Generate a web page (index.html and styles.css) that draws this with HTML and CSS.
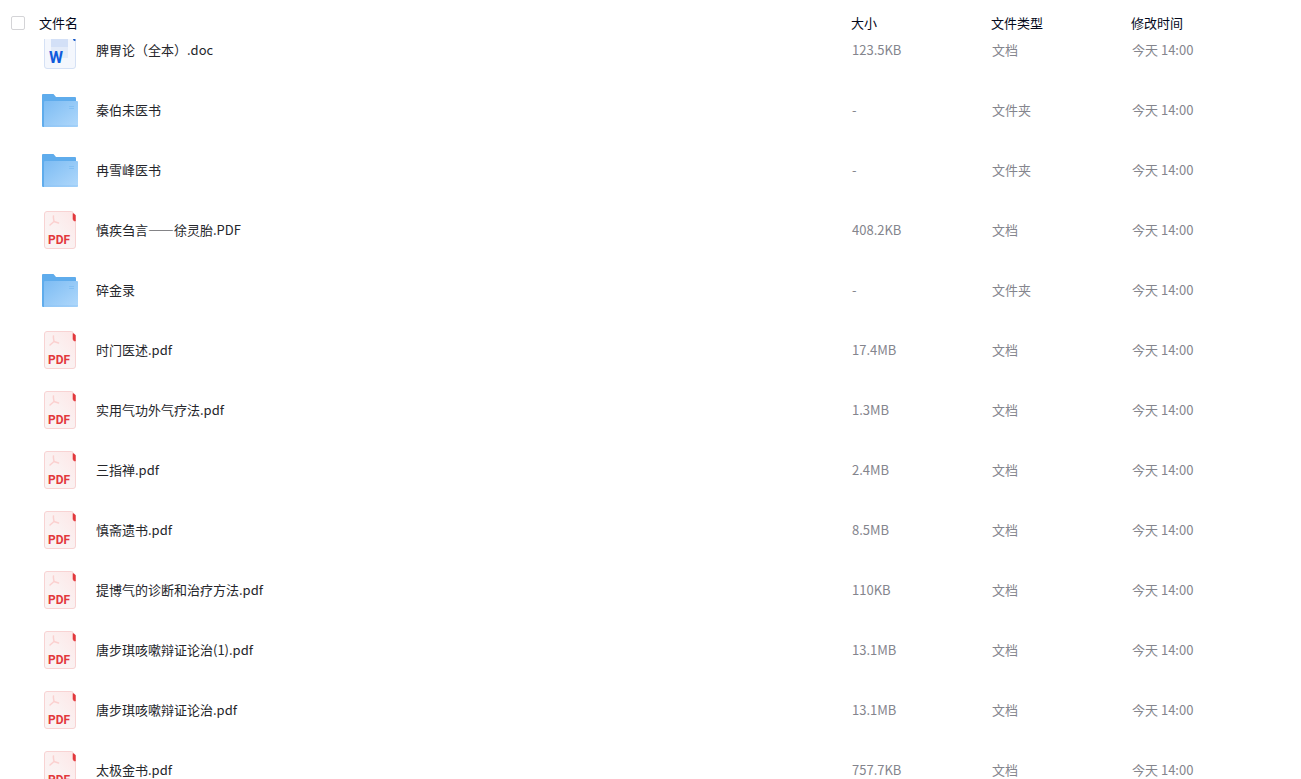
FILE: index.html
```html
<!DOCTYPE html>
<html lang="zh-CN">
<head>
<meta charset="utf-8">
<title>文件列表</title>
<link rel="stylesheet" href="styles.css">
</head>
<body>

<svg class="symbols" aria-hidden="true">
  <defs>
    <linearGradient id="folder-front" x1="0" y1="0" x2="1" y2="1">
      <stop offset="0" stop-color="#7dbcf3"/>
      <stop offset="1" stop-color="#b0d8fb"/>
    </linearGradient>
    <linearGradient id="pdf-page" x1="1" y1="0" x2="0" y2="1">
      <stop offset="0" stop-color="#fde6e6"/>
      <stop offset="0.5" stop-color="#fbf1f1"/>
      <stop offset="1" stop-color="#faf5f5"/>
    </linearGradient>
  </defs>
  <symbol id="icon-folder" viewBox="0 0 40 40">
    <path d="M2 5a1 1 0 0 1 1-1h10.500l2.500 3h19a1 1 0 0 1 1 1v29H3a1 1 0 0 1-1-1z" fill="#5facec"/>
    <path d="M4 12a1 1 0 0 1 1-1h32a1 1 0 0 1 1 1v24a1 1 0 0 1-1 1H4z" fill="url(#folder-front)"/>
    <path d="M4 35h34v1a1 1 0 0 1-1 1H4z" fill="#8cc4f5" opacity=".4"/>
    <path d="M29 16.500h5M29 18.500h5" stroke="#84c0f4"/>
  </symbol>
  <symbol id="icon-pdf" viewBox="0 0 40 40">
    <path d="M7 1.500h24.500q1.500 0 1.500 1.500v5.500q0 2 2.500 2.500V36a2.500 2.500 0 0 1-2.500 2.500H7A2.500 2.500 0 0 1 4.500 36V4A2.500 2.500 0 0 1 7 1.500z" fill="url(#pdf-page)" stroke="#f8d3d3"/>
    <path d="M33 3.500q2 .5 2.500 2V11h-1q-1.500-.5-1.500-2z" fill="#e2393d" stroke="#e2393d" stroke-width=".5"/>
    <path d="M13.500 6c-.5 2 .500 4 .500 5.500l-4 3.500M14 11.500l4.500 1.500" fill="none" stroke="#fbd0cf" stroke-width="1.500" stroke-linecap="round"/>
  </symbol>
  <symbol id="icon-doc" viewBox="0 0 40 40">
    <path d="M7 1.500h24.500q1.500 0 1.500 1.500v5.500q0 2 2.500 2.500V36a2.500 2.500 0 0 1-2.500 2.500H7A2.500 2.500 0 0 1 4.500 36V4A2.500 2.500 0 0 1 7 1.500z" fill="#f4f7fd" stroke="#d5e1f5"/>
    <path d="M33 3.500q2 .5 2.500 2V11h-1q-1.500-.5-1.500-2z" fill="#1659c7"/>
    <path d="M11 7h17v10H11z" fill="#d3e0f7"/>
    <path d="M11 17h17v11H11z" fill="#e3ebf9"/>
  </symbol>
</svg>

<div class="file-list">
  <table class="files files-head">
    <thead>
      <tr>
        <th class="col-check"><input type="checkbox" class="check-all" aria-label="全选"></th>
        <th class="col-title">文件名</th>
        <th class="col-size">大小</th>
        <th class="col-type">文件类型</th>
        <th class="col-time">修改时间</th>
      </tr>
    </thead>
  </table>

  <div class="files-scroll">
    <table class="files files-body">
      <tbody>
        <tr>
          <td class="col-icon"><svg class="icon"><use href="#icon-doc"/><text x="9" y="33" class="doc-mark">W</text></svg></td>
          <td class="col-name">脾胃论（全本）.doc</td>
          <td class="col-size">123.5KB</td>
          <td class="col-type">文档</td>
          <td class="col-time">今天 14:00</td>
        </tr>
        <tr>
          <td class="col-icon"><svg class="icon"><use href="#icon-folder"/></svg></td>
          <td class="col-name">秦伯未医书</td>
          <td class="col-size">-</td>
          <td class="col-type">文件夹</td>
          <td class="col-time">今天 14:00</td>
        </tr>
        <tr>
          <td class="col-icon"><svg class="icon"><use href="#icon-folder"/></svg></td>
          <td class="col-name">冉雪峰医书</td>
          <td class="col-size">-</td>
          <td class="col-type">文件夹</td>
          <td class="col-time">今天 14:00</td>
        </tr>
        <tr>
          <td class="col-icon"><svg class="icon"><use href="#icon-pdf"/><text x="8" y="34" class="pdf-mark">PDF</text></svg></td>
          <td class="col-name">慎疾刍言——徐灵胎.PDF</td>
          <td class="col-size">408.2KB</td>
          <td class="col-type">文档</td>
          <td class="col-time">今天 14:00</td>
        </tr>
        <tr>
          <td class="col-icon"><svg class="icon"><use href="#icon-folder"/></svg></td>
          <td class="col-name">碎金录</td>
          <td class="col-size">-</td>
          <td class="col-type">文件夹</td>
          <td class="col-time">今天 14:00</td>
        </tr>
        <tr>
          <td class="col-icon"><svg class="icon"><use href="#icon-pdf"/><text x="8" y="34" class="pdf-mark">PDF</text></svg></td>
          <td class="col-name">时门医述.pdf</td>
          <td class="col-size">17.4MB</td>
          <td class="col-type">文档</td>
          <td class="col-time">今天 14:00</td>
        </tr>
        <tr>
          <td class="col-icon"><svg class="icon"><use href="#icon-pdf"/><text x="8" y="34" class="pdf-mark">PDF</text></svg></td>
          <td class="col-name">实用气功外气疗法.pdf</td>
          <td class="col-size">1.3MB</td>
          <td class="col-type">文档</td>
          <td class="col-time">今天 14:00</td>
        </tr>
        <tr>
          <td class="col-icon"><svg class="icon"><use href="#icon-pdf"/><text x="8" y="34" class="pdf-mark">PDF</text></svg></td>
          <td class="col-name">三指禅.pdf</td>
          <td class="col-size">2.4MB</td>
          <td class="col-type">文档</td>
          <td class="col-time">今天 14:00</td>
        </tr>
        <tr>
          <td class="col-icon"><svg class="icon"><use href="#icon-pdf"/><text x="8" y="34" class="pdf-mark">PDF</text></svg></td>
          <td class="col-name">慎斋遗书.pdf</td>
          <td class="col-size">8.5MB</td>
          <td class="col-type">文档</td>
          <td class="col-time">今天 14:00</td>
        </tr>
        <tr>
          <td class="col-icon"><svg class="icon"><use href="#icon-pdf"/><text x="8" y="34" class="pdf-mark">PDF</text></svg></td>
          <td class="col-name">提博气的诊断和治疗方法.pdf</td>
          <td class="col-size">110KB</td>
          <td class="col-type">文档</td>
          <td class="col-time">今天 14:00</td>
        </tr>
        <tr>
          <td class="col-icon"><svg class="icon"><use href="#icon-pdf"/><text x="8" y="34" class="pdf-mark">PDF</text></svg></td>
          <td class="col-name">唐步琪咳嗽辩证论治(1).pdf</td>
          <td class="col-size">13.1MB</td>
          <td class="col-type">文档</td>
          <td class="col-time">今天 14:00</td>
        </tr>
        <tr>
          <td class="col-icon"><svg class="icon"><use href="#icon-pdf"/><text x="8" y="34" class="pdf-mark">PDF</text></svg></td>
          <td class="col-name">唐步琪咳嗽辩证论治.pdf</td>
          <td class="col-size">13.1MB</td>
          <td class="col-type">文档</td>
          <td class="col-time">今天 14:00</td>
        </tr>
        <tr>
          <td class="col-icon"><svg class="icon"><use href="#icon-pdf"/><text x="8" y="34" class="pdf-mark">PDF</text></svg></td>
          <td class="col-name">太极金书.pdf</td>
          <td class="col-size">757.7KB</td>
          <td class="col-type">文档</td>
          <td class="col-time">今天 14:00</td>
        </tr>
      </tbody>
    </table>
  </div>
</div>

</body>
</html>
```

FILE: styles.css
```css
* {
  box-sizing: border-box;
}

body {
  margin: 0;
  background: #fff;
  font-family: "Noto Sans CJK SC", sans-serif;
  font-size: 13px;
  line-height: 20px;
  color: #25262b;
}

.symbols {
  position: absolute;
  width: 0;
  height: 0;
}

.file-list {
  display: flex;
  flex-direction: column;
  height: 100vh;
  overflow: hidden;
}

.files {
  width: 100%;
  table-layout: fixed;
  border-collapse: collapse;
}

.files th,
.files td {
  padding: 0;
  text-align: left;
  white-space: nowrap;
}

/* Header */
.files-head {
  flex: none;
}

.files-head th {
  height: 39px;
  padding-top: 7px;
  font-weight: 400;
  color: #03081a;
}

.files-head .col-check {
  width: 39px;
  padding-left: 11px;
}

.check-all {
  display: block;
  appearance: none;
  width: 14px;
  height: 14px;
  margin: 0;
  border: 1px solid #d4d4d7;
  border-radius: 2px;
  background: #fff;
}

/* Columns */
.col-size,
.col-type {
  width: 140px;
}

.col-time {
  width: 170px;
}

.col-icon {
  width: 96px;
}

/* Rows, the list is scrolled a bit under the header */
.files-scroll {
  flex: 1;
  min-height: 0;
  overflow: hidden;
}

.files-body {
  margin-top: -19px;
}

.files-body td {
  height: 60px;
  color: #84858d;
}

.files-body .col-icon {
  padding-left: 40px;
}

.files-body .col-name {
  color: #25262b;
  overflow: hidden;
  text-overflow: ellipsis;
}

.files-body .col-size,
.files-body .col-type,
.files-body .col-time {
  padding-left: 1px;
}

.icon {
  display: block;
  width: 40px;
  height: 40px;
}

.pdf-mark {
  font: bold 12px Roboto, sans-serif;
  fill: #e2393d;
}

.doc-mark {
  font: bold 16px Roboto, sans-serif;
  fill: #0f5bdc;
}
```
